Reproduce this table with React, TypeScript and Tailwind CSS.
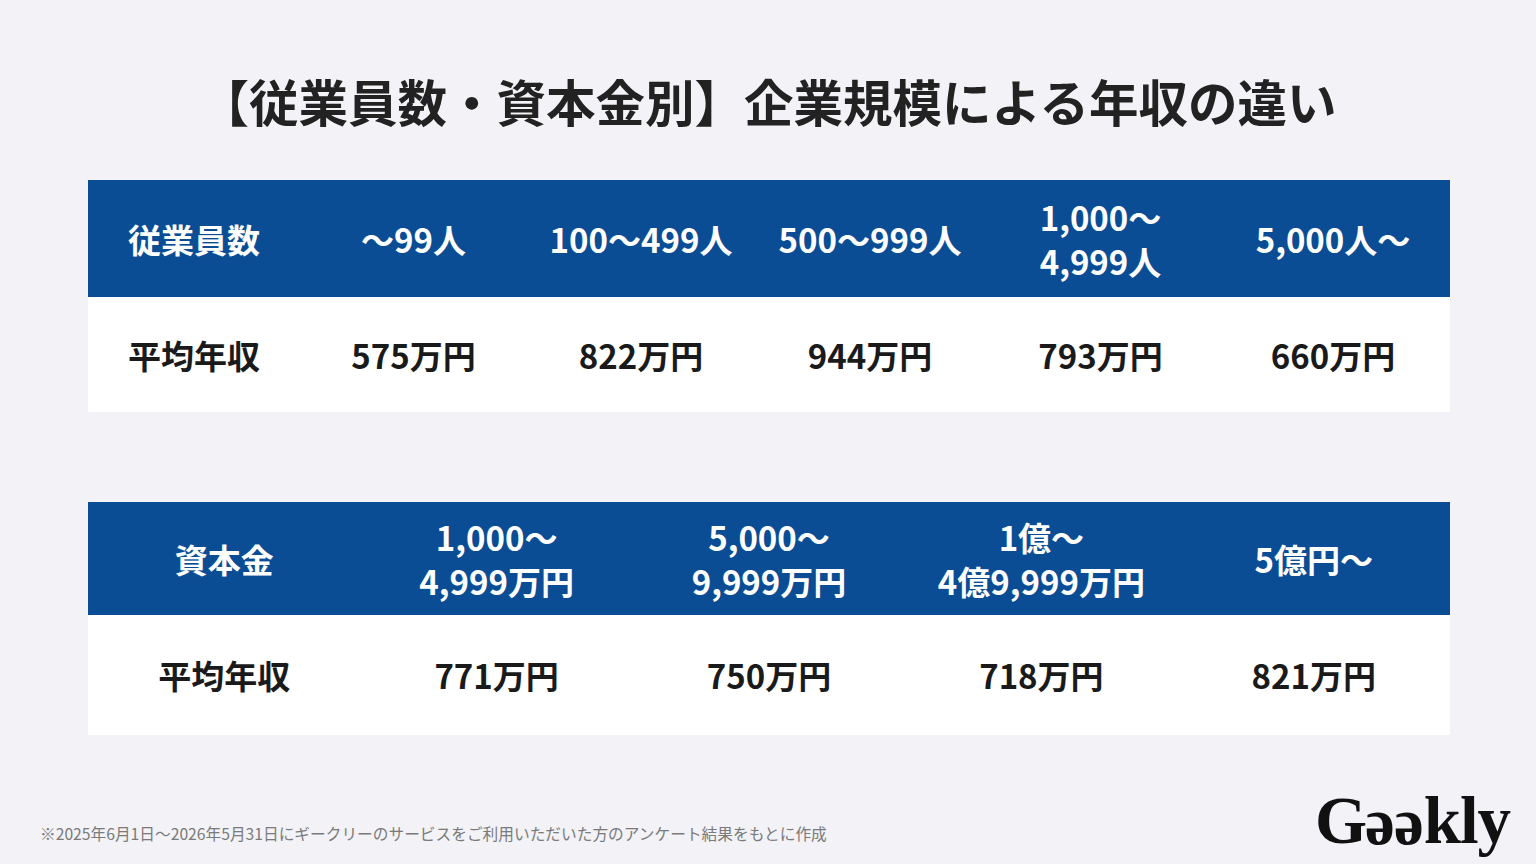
const employees = [
  { label: '〜99人', pay: '575万円' },
  { label: '100〜499人', pay: '822万円' },
  { label: '500〜999人', pay: '944万円' },
  { label: '1,000〜\n4,999人', pay: '793万円' },
  { label: '5,000人〜', pay: '660万円' },
]

const capital = [
  { label: '1,000〜\n4,999万円', pay: '771万円' },
  { label: '5,000〜\n9,999万円', pay: '750万円' },
  { label: '1億〜\n4億9,999万円', pay: '718万円' },
  { label: '5億円〜', pay: '821万円' },
]

function Cell({ text, head }: { text: string; head?: boolean }) {
  return (
    <div
      className={`flex items-center justify-center text-center text-[33px] font-bold leading-[44px] whitespace-pre-line ${
        head ? 'text-white' : 'text-[#1a1a1a]'
      }`}
    >
      {text}
    </div>
  )
}

export default function App() {
  return (
    <div
      className="relative h-[864px] w-[1536px] overflow-hidden bg-[#f2f2f7]"
      style={{ fontFamily: '"Noto Sans CJK JP", "Noto Sans", sans-serif' }}
    >
      <h1 className="pt-[64px] text-center text-[49.5px] font-bold leading-[74px] text-[#222]">
        【従業員数・資本金別】企業規模による年収の違い
      </h1>

      {/* 従業員数 */}
      <div className="ml-[88px] mt-[42px] w-[1362px]">
        <div className="grid h-[117px] grid-cols-[212px_227px_228px_230px_231px_1fr] bg-[#0a4d94]">
          <Cell text="従業員数" head />
          {employees.map((e) => (
            <Cell key={e.label} text={e.label} head />
          ))}
        </div>
        <div className="grid h-[115px] grid-cols-[212px_227px_228px_230px_231px_1fr] bg-white">
          <Cell text="平均年収" />
          {employees.map((e) => (
            <Cell key={e.label} text={e.pay} />
          ))}
        </div>
      </div>

      {/* 資本金 */}
      <div className="ml-[88px] mt-[90px] w-[1362px]">
        <div className="grid h-[113px] grid-cols-5 bg-[#0a4d94]">
          <Cell text="資本金" head />
          {capital.map((c) => (
            <Cell key={c.label} text={c.label} head />
          ))}
        </div>
        <div className="grid h-[120px] grid-cols-5 bg-white">
          <Cell text="平均年収" />
          {capital.map((c) => (
            <Cell key={c.label} text={c.pay} />
          ))}
        </div>
      </div>

      <div className="mt-[52px] flex items-end justify-between pl-[40px] pr-[26px]">
        <p className="mb-[8px] text-[15.7px] leading-[22px] text-[#7a7a7a]">
          ※2025年6月1日〜2026年5月31日にギークリーのサービスをご利用いただいた方のアンケート結果をもとに作成
        </p>
        {/* logo: the two e's are turned upside down */}
        <div
          className="text-[67px] font-bold leading-[66px] tracking-[-0.015em] text-[#111]"
          style={{ fontFamily: '"Liberation Serif", serif' }}
        >
          G<span className="inline-block rotate-180 origin-[50%_41px]">e</span>
          <span className="inline-block rotate-180 origin-[50%_41px]">e</span>kly
        </div>
      </div>
    </div>
  )
}
